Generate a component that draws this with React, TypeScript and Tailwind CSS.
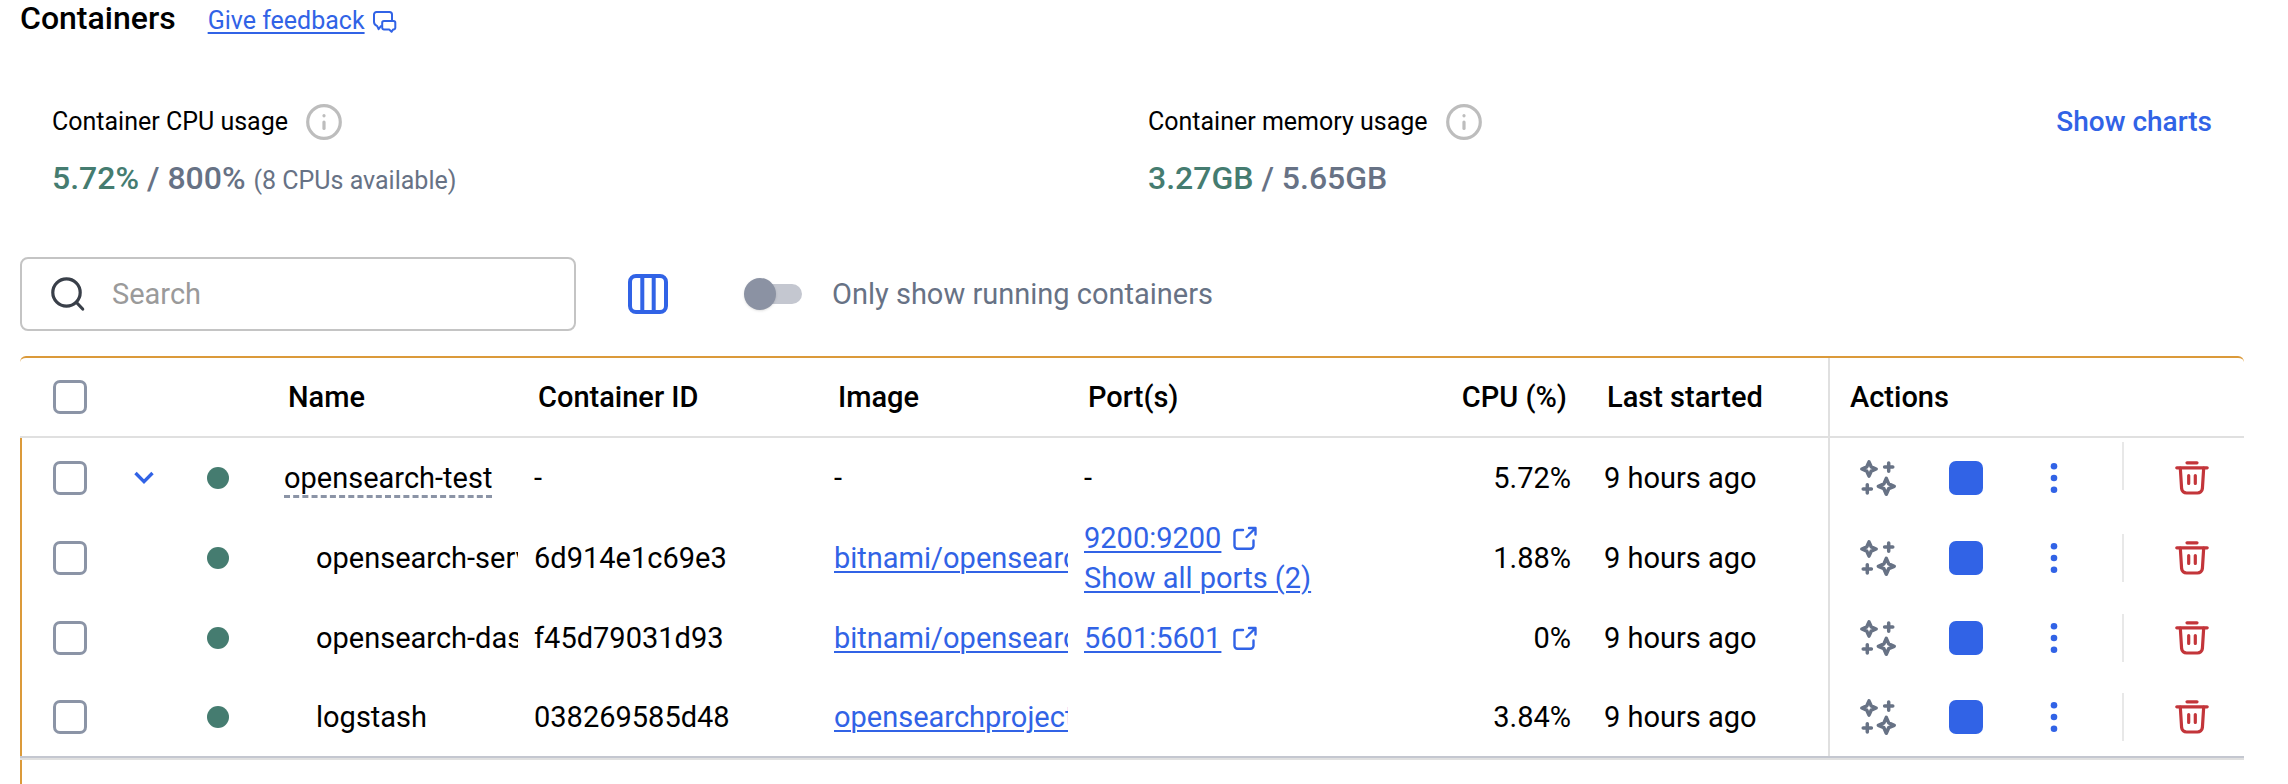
import { useState } from "react";

type Row = {
  name: string;
  group?: boolean;
  id: string;
  image: string;
  port?: string;
  more?: string;
  cpu: string;
  started: string;
};

const rows: Row[] = [
  { name: "opensearch-test", group: true, id: "-", image: "-", cpu: "5.72%", started: "9 hours ago" },
  {
    name: "opensearch-server",
    id: "6d914e1c69e3",
    image: "bitnami/opensearch",
    port: "9200:9200",
    more: "Show all ports (2)",
    cpu: "1.88%",
    started: "9 hours ago",
  },
  {
    name: "opensearch-dashboards",
    id: "f45d79031d93",
    image: "bitnami/opensearch",
    port: "5601:5601",
    cpu: "0%",
    started: "9 hours ago",
  },
  { name: "logstash", id: "038269585d48", image: "opensearchproject/logstash", cpu: "3.84%", started: "9 hours ago" },
];

function InfoIcon() {
  return (
    <svg className="size-9" viewBox="0 0 36 36" fill="none" stroke="#bdbdbd" strokeWidth="3.200" strokeLinecap="round" aria-hidden="true">
      <circle cx="18" cy="18" r="16.3" />
      <path d="M18 18v6.5" />
      <path d="M18 11.6v.2" />
    </svg>
  );
}

function FeedbackIcon() {
  return (
    <svg className="size-6" viewBox="0 0 24 24" fill="none" stroke="#3163e6" strokeWidth="2" strokeLinejoin="round" strokeLinecap="round" aria-hidden="true">
      <path d="M8 17l-2.400 3.200L4.200 17.200C2.200 16.200 1 14.800 1 13V5.500A2.500 2.500 0 0 1 3.500 3h13A2.500 2.500 0 0 1 19 5.500V11" />
      <path d="M11 12h9.500A1.800 1.800 0 0 1 22.300 13.800v5a1.800 1.800 0 0 1-1.800 1.800H20l-1.400 2.200-2.400-2.200H11a1.800 1.800 0 0 1-1.800-1.800v-5A1.800 1.800 0 0 1 11 12z" />
    </svg>
  );
}

function SearchIcon() {
  return (
    <svg className="size-9" viewBox="0 0 36 36" fill="none" stroke="#393f49" strokeWidth="3.200" strokeLinecap="round" aria-hidden="true">
      <circle cx="16.500" cy="16.500" r="13.700" />
      <path d="M26.500 26.500l6.200 6.500" />
    </svg>
  );
}

function ColumnsIcon() {
  return (
    <svg className="size-10" viewBox="0 0 40 40" fill="none" stroke="#3163e6" strokeWidth="4" aria-hidden="true">
      <rect x="2" y="2" width="36" height="36" rx="6" />
      <path d="M14.300 2v36M25.700 2v36" />
    </svg>
  );
}

function ExternalIcon() {
  return (
    <svg className="size-6" viewBox="0 0 24 24" fill="none" stroke="#3163e6" strokeWidth="2.400" strokeLinecap="round" strokeLinejoin="round" aria-hidden="true">
      <path d="M10 4H4.500A3 3 0 0 0 1.500 7v12.800A3 3 0 0 0 4.500 22.800h13A3 3 0 0 0 20.500 19.800v-5.300" />
      <path d="M16 2h6.500v6.500M22 2.500L13.500 11" />
    </svg>
  );
}

function SparkIcon() {
  return (
    <svg className="size-9" viewBox="0 0 36 36" fill="none" stroke="#677285" strokeWidth="3.500" strokeLinejoin="round" strokeLinecap="round" aria-hidden="true">
      <path d="M9 1.900l2.200 4.900L16.100 9l-4.900 2.200L9 16.100l-2.200-4.900L1.900 9l4.900-2.200z" />
      <path d="M26.300 18.400l2.400 5.500 5.500 2.400-5.500 2.400-2.400 5.500-2.400-5.500-5.500-2.400 5.500-2.400z" />
      <path d="M28.700 3v8.200M24.600 7.100h8.200M7.300 24.800v8.200M3.200 28.900h8.200" />
    </svg>
  );
}

function TrashIcon() {
  return (
    <svg className="size-9" viewBox="0 0 36 36" fill="none" stroke="#c3353a" strokeWidth="3.200" strokeLinecap="round" strokeLinejoin="round" aria-hidden="true">
      <path d="M13 2.800h10" />
      <path d="M2.800 7.800h30.400" />
      <path d="M6.300 8l1.300 20.500a5 5 0 0 0 5 4.500h10.800a5 5 0 0 0 5-4.500L29.700 8" />
      <path d="M14.700 15.500v8M21.300 15.500v8" />
    </svg>
  );
}

function Checkbox({ label }: { label: string }) {
  return (
    <input
      type="checkbox"
      aria-label={label}
      className="block size-[34px] appearance-none rounded-[7px] border-[3px] border-[#8b94a6] bg-white checked:bg-[#3163e6]"
    />
  );
}

const link = "text-[#3163e6] underline decoration-2 underline-offset-[3px]";

function ContainerRow({ row, last }: { row: Row; last: boolean }) {
  return (
    <tr className={last ? "h-[78px]" : "h-20"}>
      <td className="border-l-2 border-[#db9a3a]">
        <div className="pl-[31px]">
          <Checkbox label={`Select ${row.name}`} />
        </div>
      </td>
      <td>
        {row.group && (
          <button aria-label="Collapse" className="flex pl-0.5">
            <svg className="h-3.5 w-5" viewBox="0 0 20 14" fill="none" stroke="#3163e6" strokeWidth="3.400" aria-hidden="true">
              <path d="M1.500 2l8.500 8.600L18.500 2" />
            </svg>
          </button>
        )}
      </td>
      <td>
        <span className="block size-[22px] rounded-full bg-[#457c70]" />
      </td>
      <td>
        {row.group ? (
          <div className="flex">
            <a href="#group" className="border-b-3 border-dashed border-[#8b94a6] pt-[3px] leading-[34px]">
              {row.name}
            </a>
          </div>
        ) : (
          <div className="mr-4 overflow-hidden pl-8 whitespace-nowrap">{row.name}</div>
        )}
      </td>
      <td>{row.id}</td>
      <td>
        <div className="mr-4 overflow-hidden whitespace-nowrap">
          {row.group ? row.image : <a href="#image" className={link}>{row.image}</a>}
        </div>
      </td>
      <td>
        {row.group && "-"}
        {row.port && (
          <div className="flex items-center gap-3">
            <a href="#port" className={link}>{row.port}</a>
            <ExternalIcon />
          </div>
        )}
        {row.more && <a href="#ports" className={link}>{row.more}</a>}
      </td>
      <td className="text-right">{row.cpu}</td>
      <td>
        <div className="pl-[33px]">{row.started}</div>
      </td>
      <td className="border-l-2 border-[#e0e0e0]">
        <div className="flex h-[72px] items-center pl-[30px]">
          <button aria-label="Ask" className="mr-[53px]"><SparkIcon /></button>
          <button aria-label="Stop" className="mr-[67px] size-[34px] rounded-[7px] bg-[#3163e6]" />
          <button aria-label="More">
            <svg className="h-8 w-2" viewBox="0 0 8 32" fill="#3163e6" aria-hidden="true">
              <circle cx="4" cy="4.300" r="3.300" />
              <circle cx="4" cy="16" r="3.300" />
              <circle cx="4" cy="27.700" r="3.300" />
            </svg>
          </button>
          <span className={row.group ? "ml-auto h-12 w-0.5 self-start bg-[#e8e8e8]" : "ml-auto h-12 w-0.5 bg-[#e8e8e8]"} />
          <button aria-label="Delete" className="mr-[34px] ml-[50px]"><TrashIcon /></button>
        </div>
      </td>
    </tr>
  );
}

export default function App() {
  const [running, setRunning] = useState(false);
  return (
    <main className="min-h-screen bg-white pl-5 font-['Roboto',sans-serif] text-[29px] leading-10 text-black">
      <header className="flex h-[42px] items-start gap-8">
        <h1 className="text-[32px] leading-9 font-medium">Containers</h1>
        <div className="flex items-center gap-2 text-[25px] leading-[42px]">
          <a href="#feedback" className={link}>Give feedback</a>
          <FeedbackIcon />
        </div>
      </header>

      <section className="grid grid-cols-2 pt-[58px] pr-11 pl-8 text-[#677285]">
        <div>
          <div className="flex h-11 items-center gap-[18px] text-[25px] text-black">
            Container CPU usage <InfoIcon />
          </div>
          <p className="pt-3.5 text-[32px] font-medium">
            <span className="text-[#457c70]">5.72%</span> / 800%{" "}
            <span className="text-[25px] leading-none font-normal">(8 CPUs available)</span>
          </p>
        </div>
        <div className="flex items-start justify-between pr-8">
          <div>
            <div className="flex h-11 items-center gap-[18px] text-[25px] text-black">
              Container memory usage <InfoIcon />
            </div>
            <p className="pt-3.5 text-[32px] font-medium">
              <span className="text-[#457c70]">3.27GB</span> / 5.65GB
            </p>
          </div>
          <button className="h-11 text-[28px] font-medium text-[#3163e6]">Show charts</button>
        </div>
      </section>

      <section className="mt-[59px] flex h-[74px] items-center">
        <label className="flex h-full w-[556px] items-center gap-[26px] rounded-lg border-2 border-[#c4c4c4] px-7">
          <SearchIcon />
          <input aria-label="Search" placeholder="Search" className="min-w-0 flex-1 outline-none placeholder:text-[#9a9a9a]" />
        </label>
        <button aria-label="Columns" className="ml-[52px]"><ColumnsIcon /></button>
        <label className="ml-[76px] flex items-center text-[#677285]">
          <input type="checkbox" role="switch" checked={running} onChange={() => setRunning(!running)} className="sr-only" />
          <span className="z-10 size-8 rounded-full bg-[#8b92a3] shadow" />
          <span className="mr-[30px] -ml-4 h-5 w-[42px] rounded-full bg-[#c4c7d0]" />
          Only show running containers
        </label>
      </section>

      <div className="mt-[25px] mr-11">
        <div className="rounded-t-md border-t-2 border-[#db9a3a]">
          <table className="w-full table-fixed border-separate border-spacing-0 text-left [&_td]:p-0 [&_th]:border-b-2 [&_th]:border-[#e0e0e0] [&_th]:p-0 [&_th]:font-medium">
            <colgroup>
              <col className="w-28" />
              <col className="w-[75px]" />
              <col className="w-[77px]" />
              <col className="w-[250px]" />
              <col className="w-[300px]" />
              <col className="w-[250px]" />
              <col />
              <col className="w-[130px]" />
              <col className="w-[257px]" />
              <col className="w-[416px]" />
            </colgroup>
            <thead>
              <tr className="h-20">
                <th><div className="pl-[33px]"><Checkbox label="Select all" /></div></th>
                <th />
                <th />
                <th><div className="pl-1">Name</div></th>
                <th><div className="pl-1">Container ID</div></th>
                <th><div className="pl-1">Image</div></th>
                <th><div className="pl-1">Port(s)</div></th>
                <th><div className="pr-1 text-right">CPU (%)</div></th>
                <th><div className="pl-9">Last started</div></th>
                <th className="border-l-2"><div className="pl-5">Actions</div></th>
              </tr>
            </thead>
            <tbody>
              {rows.map((r, i) => <ContainerRow key={r.id} row={r} last={i === rows.length - 1} />)}
            </tbody>
          </table>
        </div>
        <div className="border-t-2 border-[#c4c7d0]">
          <div className="h-0.5 bg-[#e0e0e0]" />
          <div className="h-6 border-l-2 border-[#db9a3a]" />
        </div>
      </div>
    </main>
  );
}
